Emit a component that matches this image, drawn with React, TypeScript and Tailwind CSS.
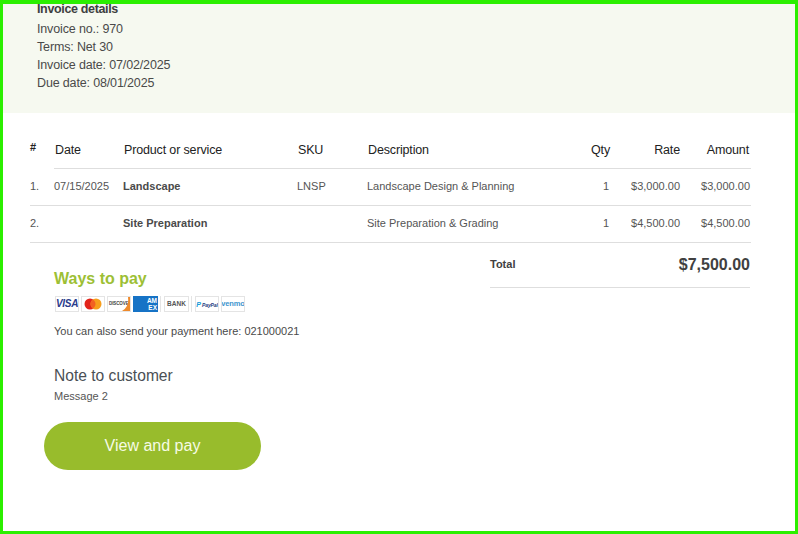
import React from "react";

const font = "font-['Liberation_Sans',Arial,sans-serif]";

const rows = [
  { n: "1.", date: "07/15/2025", product: "Landscape", sku: "LNSP", desc: "Landscape Design & Planning", qty: "1", rate: "$3,000.00", amount: "$3,000.00" },
  { n: "2.", date: "", product: "Site Preparation", sku: "", desc: "Site Preparation & Grading", qty: "1", rate: "$4,500.00", amount: "$4,500.00" },
];

const Badge = ({ children, className = "" }: { children?: React.ReactNode; className?: string }) => (
  <div className={`relative flex h-[16px] w-[24px] shrink-0 items-center justify-center overflow-hidden border border-[#e4e4e4] bg-white ${className}`}>
    {children}
  </div>
);

const Sep = () => <div className="h-[16px] w-px shrink-0 bg-[#e4e4e4]" />;

const PayIcons = () => (
  <div className="flex items-center pl-[1px]">
    <Badge>
      <span className="text-[10px] font-bold italic leading-none tracking-[-0.3px] text-[#2a3a8c]">VISA</span>
    </Badge>
    <Badge className="ml-[2px]">
      <svg width="18" height="12" viewBox="0 0 18 12">
        <circle cx="6" cy="6" r="5.5" fill="#e2231a" />
        <circle cx="12" cy="6" r="5.5" fill="#f79e1b" />
        <path d="M9 1.4a5.5 5.5 0 0 1 0 9.2a5.5 5.5 0 0 1 0-9.2z" fill="#f26122" />
      </svg>
    </Badge>
    <Badge className="ml-[2px] justify-start border-[#e3bfa0] pl-[1px]">
      <span className="text-[4.5px] font-bold leading-none tracking-[-0.1px] text-[#444]">DISCOVER</span>
      <svg className="absolute bottom-0 right-0" width="8" height="14" viewBox="0 0 8 14">
        <path d="M8 0v14H0C4 12 7 7 6 0z" fill="#ee8a2c" />
      </svg>
    </Badge>
    <div className="ml-[2px] flex h-[16px] w-[25px] shrink-0 flex-col items-end justify-center bg-[#1673c6] pr-[1px] text-[6.5px] font-bold leading-[7.5px] text-white">
      <span>AM</span>
      <span>EX</span>
    </div>
    <div className="ml-[2px]">
      <Sep />
    </div>
    <Badge className="ml-[3px] w-[25px]">
      <span className="text-[6.5px] font-bold leading-none text-[#555]">BANK</span>
    </Badge>
    <div className="ml-[2px]">
      <Sep />
    </div>
    <Badge className="ml-[3px]">
      <span className="text-[5px] font-bold italic leading-none tracking-[-0.1px] text-[#253b80]">
        <span className="text-[7px] text-[#179bd7]">P</span> PayPal
      </span>
    </Badge>
    <Badge className="ml-[2px]">
      <span className="text-[7.5px] font-bold leading-none tracking-[-0.1px] text-[#3d95ce]">venmo</span>
    </Badge>
  </div>
);

export default function App() {
  return (
    <div className={`${font} h-[534px] w-[798px] overflow-hidden border-x-[3px] border-t-[4px] border-b-[3px] border-[#2bef00] bg-white`}>
      <div className="h-[109px] bg-[#f6f9f0] pl-[34px] text-[12.5px] leading-[18px] tracking-[-0.15px] text-[#4a4a4a]">
        <div className="font-bold leading-[10px] tracking-[-0.35px] text-[#404040]">Invoice details</div>
        <div className="mt-[6px]">Invoice no.: 970</div>
        <div>Terms: Net 30</div>
        <div>Invoice date: 07/02/2025</div>
        <div>Due date: 08/01/2025</div>
      </div>

      <div className="pl-[27px] pr-[44px]">
        <div className="flex h-[55px] items-center pt-[20px] text-[12.5px] tracking-[-0.15px] text-[#222]">
          <div className="w-[24px] -translate-y-[3px] text-[11px] font-bold">#</div>
          <div className="w-[70px] pl-[1px]">Date</div>
          <div className="w-[174px]">Product or service</div>
          <div className="w-[70px]">SKU</div>
          <div className="w-[210px]">Description</div>
          <div className="w-[32px] text-right">Qty</div>
          <div className="w-[70px] text-right">Rate</div>
          <div className="flex-1 pr-[2px] text-right">Amount</div>
        </div>
        <div className="ml-[24px] h-px bg-[#dedede]" />
        {rows.map((r) => (
          <div key={r.n} className="flex h-[37px] items-center border-b border-[#dedede] pb-[2px] text-[11px] text-[#555]">
            <div className="w-[24px]">{r.n}</div>
            <div className="w-[69px]">{r.date}</div>
            <div className="w-[174px] font-bold text-[#4a4a4a]">{r.product}</div>
            <div className="w-[70px]">{r.sku}</div>
            <div className="w-[210px]">{r.desc}</div>
            <div className="w-[32px] text-right">{r.qty}</div>
            <div className="w-[71px] text-right">{r.rate}</div>
            <div className="flex-1 pr-[1px] text-right">{r.amount}</div>
          </div>
        ))}

        <div className="flex items-start">
          <div className="w-[460px] pl-[24px] pt-[26px]">
            <div className="text-[16px] font-bold leading-[20px] text-[#9dbf35]">Ways to pay</div>
            <div className="mt-[7px]">
              <PayIcons />
            </div>
            <div className="mt-[12px] text-[11px] leading-[14px] text-[#4a4a4a]">You can also send your payment here: 021000021</div>
            <div className="mt-[29px] text-[15.6px] leading-[18px] text-[#4a4f55]">Note to customer</div>
            <div className="mt-[4px] text-[11px] leading-[14px] text-[#555]">Message 2</div>
            <div className="-ml-[10px] mt-[19px] flex h-[48px] w-[217px] items-center justify-center rounded-[24px] bg-[#98bc2c] pb-[1px] text-[16px] text-[#f6fbe4]">
              View and pay
            </div>
          </div>
          <div className="flex h-[45px] w-[260px] items-center justify-between border-b border-[#dedede] pb-[1px] text-[#404040]">
            <span className="text-[11px] font-bold">Total</span>
            <span className="text-[16px] font-bold">$7,500.00</span>
          </div>
        </div>
      </div>
    </div>
  );
}
